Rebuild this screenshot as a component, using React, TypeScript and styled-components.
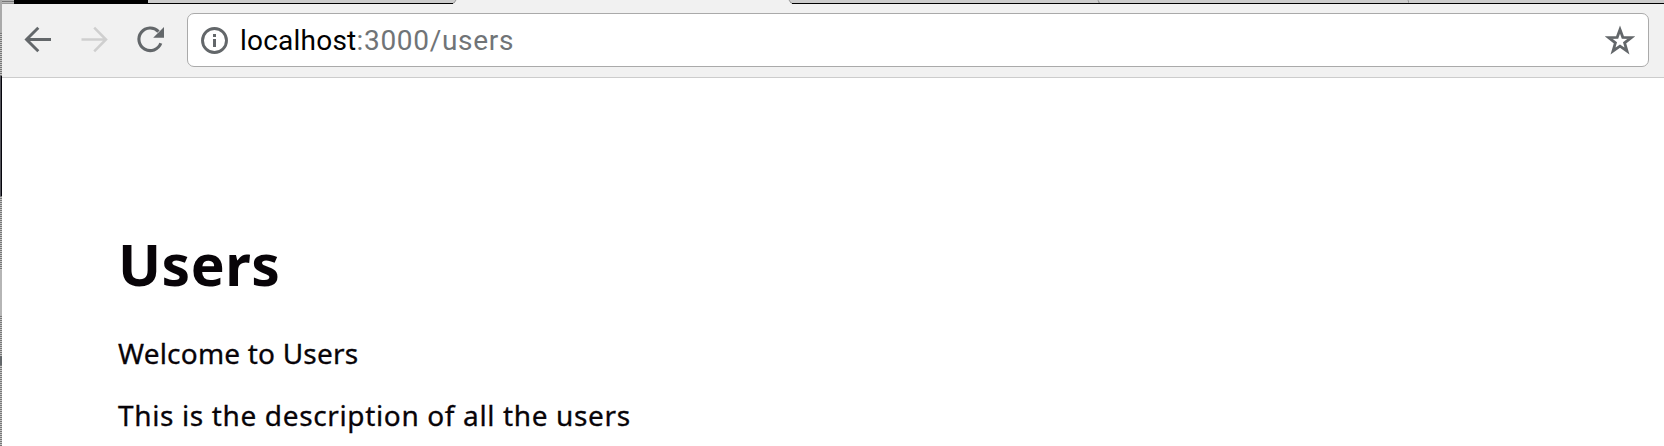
import React from 'react';
import styled, { createGlobalStyle } from 'styled-components';

const GlobalStyle = createGlobalStyle`
  * { box-sizing: border-box; }
  body { margin: 0; background: #fff; overflow: hidden; }
  svg { display: block; flex: none; }
`;

const Screen = styled.div`
  display: flex;
  width: 1664px;
  height: 446px;
  overflow: hidden;
  background: #fff;
`;

const DesktopEdge = styled.div`
  display: flex;
  flex-direction: column;
  flex: none;
  width: 2px;
`;

const EdgeSlice = styled.div<{ $height: number; $fill: string }>`
  flex: none;
  height: ${(p) => p.$height}px;
  background: ${(p) => p.$fill};
`;

const Browser = styled.div`
  flex: 1;
  min-width: 0;
  display: flex;
  flex-direction: column;
`;

const TabStrip = styled.div`
  display: flex;
  flex: none;
  height: 4px;
  background: #f1f1f1;
`;

const WindowCorner = styled.div`
  width: 12px;
  background: linear-gradient(#b5b5b5 1px, #777 1px 2px, #bbb 2px 3px, #999 3px);
`;

const HiddenControls = styled.div`
  width: 134px;
  background: #000;
`;

const Tab = styled.div<{ $width: number }>`
  flex: none;
  width: ${(p) => p.$width}px;
  background: #ccc;
  border-bottom: 1px solid #000;
`;

const ActiveTab = styled.div`
  flex: none;
  display: flex;
  justify-content: space-between;
  width: 339px;
`;

const Toolbar = styled.div`
  display: flex;
  align-items: flex-start;
  flex: none;
  height: 74px;
  padding: 9px 15px 0 18px;
  background: #f1f1f1;
  border-bottom: 1px solid #ccc;
`;

const NavButton = styled.span<{ $disabled?: boolean }>`
  display: flex;
  align-items: center;
  justify-content: center;
  flex: none;
  width: 36px;
  height: 54px;
  margin-right: 20px;
  color: ${(p) => (p.$disabled ? '#cfcfcf' : '#63676a')};
`;

const AddressBar = styled.div`
  display: flex;
  align-items: center;
  flex: 1;
  height: 54px;
  padding: 0 13px 0 12px;
  margin-left: -1px;
  color: #63676a;
  background: #fff;
  border: 1px solid #aaa;
  border-radius: 7px;
`;

const Url = styled.span`
  flex: 1;
  margin-left: 10px;
  padding-top: 2px;
  font: 28px/52px Roboto, sans-serif;
  letter-spacing: 0.7px;
  color: #707477;
`;

const Host = styled.span`
  letter-spacing: 0.22px;
  color: #000;
`;

const Page = styled.main`
  flex: 1;
  padding: 151px 0 0 116px;
  font-family: 'Noto Sans', sans-serif;
  color: #080408;
  white-space: nowrap;
`;

const Title = styled.h1`
  margin: 0 0 34px;
  font-size: 57px;
  line-height: 70px;
  font-weight: 700;
  letter-spacing: 0.5px;
`;

const Paragraph = styled.p<{ $tracking: number }>`
  margin: 0 0 22px;
  font-size: 28px;
  line-height: 40px;
  letter-spacing: ${(p) => p.$tracking}px;
  -webkit-text-stroke: 0.3px currentColor;
`;

const dotted = 'repeating-linear-gradient(#777 0 1px, #c4c4c4 1px 2px)';

const edgeSlices = [
  { height: 33, fill: '#aaa' },
  { height: 43, fill: dotted },
  { height: 120, fill: 'linear-gradient(90deg, #55555c 1px, #05050c 1px)' },
  { height: 74, fill: dotted },
  { height: 46, fill: '#b5b5b5' },
  { height: 40, fill: dotted },
  { height: 9, fill: '#63676a' },
  { height: 81, fill: dotted },
];

export default function App() {
  return (
    <>
      <GlobalStyle />
      <Screen>
        <DesktopEdge>
          {edgeSlices.map((s, i) => (
            <EdgeSlice key={i} $height={s.height} $fill={s.fill} />
          ))}
        </DesktopEdge>
        <Browser>
          <TabStrip>
            <WindowCorner />
            <HiddenControls />
            <Tab $width={305} />
            <ActiveTab>
              <svg width="4" height="4"><path d="M0 0H3L1 3H0Z" fill="#ccc" /><path d="M3 0L1 3H0" stroke="#999" fill="none" /></svg>
              <svg width="4" height="4"><path d="M1 0H4V3H3Z" fill="#ccc" /><path d="M1 0L3 3H4" stroke="#999" fill="none" /></svg>
            </ActiveTab>
            <Tab $width={307}>
              <svg width="307" height="3"><path d="M306 0L307 3" stroke="#999" /></svg>
            </Tab>
            <Tab $width={310}>
              <svg width="310" height="3"><path d="M0 1.5L0.5 3M309 0L310 3" stroke="#999" /></svg>
            </Tab>
            <Tab $width={255} />
          </TabStrip>
          <Toolbar>
            <NavButton>
              <svg width="36" height="36" viewBox="0 0 36 36" fill="none" stroke="currentColor" strokeWidth="2.9"><path d="M31 17.5H7M18.3 5.7L6.5 17.5L18.3 29.3" /></svg>
            </NavButton>
            <NavButton $disabled>
              <svg width="36" height="36" viewBox="0 0 36 36" fill="none" stroke="currentColor" strokeWidth="2.5"><path d="M5.5 17.5H29.5M18.2 5.7L30 17.5L18.2 29.3" /></svg>
            </NavButton>
            <NavButton>
              <svg width="36" height="36" viewBox="0 0 36 36" fill="none"><path d="M26.5 9.6A11.3 11.3 0 1 0 28.8 21.3" stroke="currentColor" strokeWidth="3.1" /><path d="M32 5V15.8H21.2Z" fill="currentColor" /></svg>
            </NavButton>
            <AddressBar>
              <svg width="30" height="30" viewBox="0 0 30 30" fill="none"><circle cx="14.5" cy="15.5" r="12" stroke="currentColor" strokeWidth="2.9" /><path d="M13 9H16V12H13ZM13 14H16V22H13Z" fill="currentColor" /></svg>
              <Url><Host>localhost</Host>:3000/users</Url>
              <svg width="30" height="30" viewBox="0 0 30 30" fill="none"><path d="M15 4.6L17.8 12.3L26.3 12.6L19.6 17.8L22 26L15 21.2L8 26L10.4 17.8L3.7 12.6L12.2 12.3Z" stroke="currentColor" strokeWidth="2.8" /></svg>
            </AddressBar>
          </Toolbar>
          <Page>
            <Title>Users</Title>
            <Paragraph $tracking={0.2}>Welcome to Users</Paragraph>
            <Paragraph $tracking={0.64}>This is the description of all the users</Paragraph>
          </Page>
        </Browser>
      </Screen>
    </>
  );
}
